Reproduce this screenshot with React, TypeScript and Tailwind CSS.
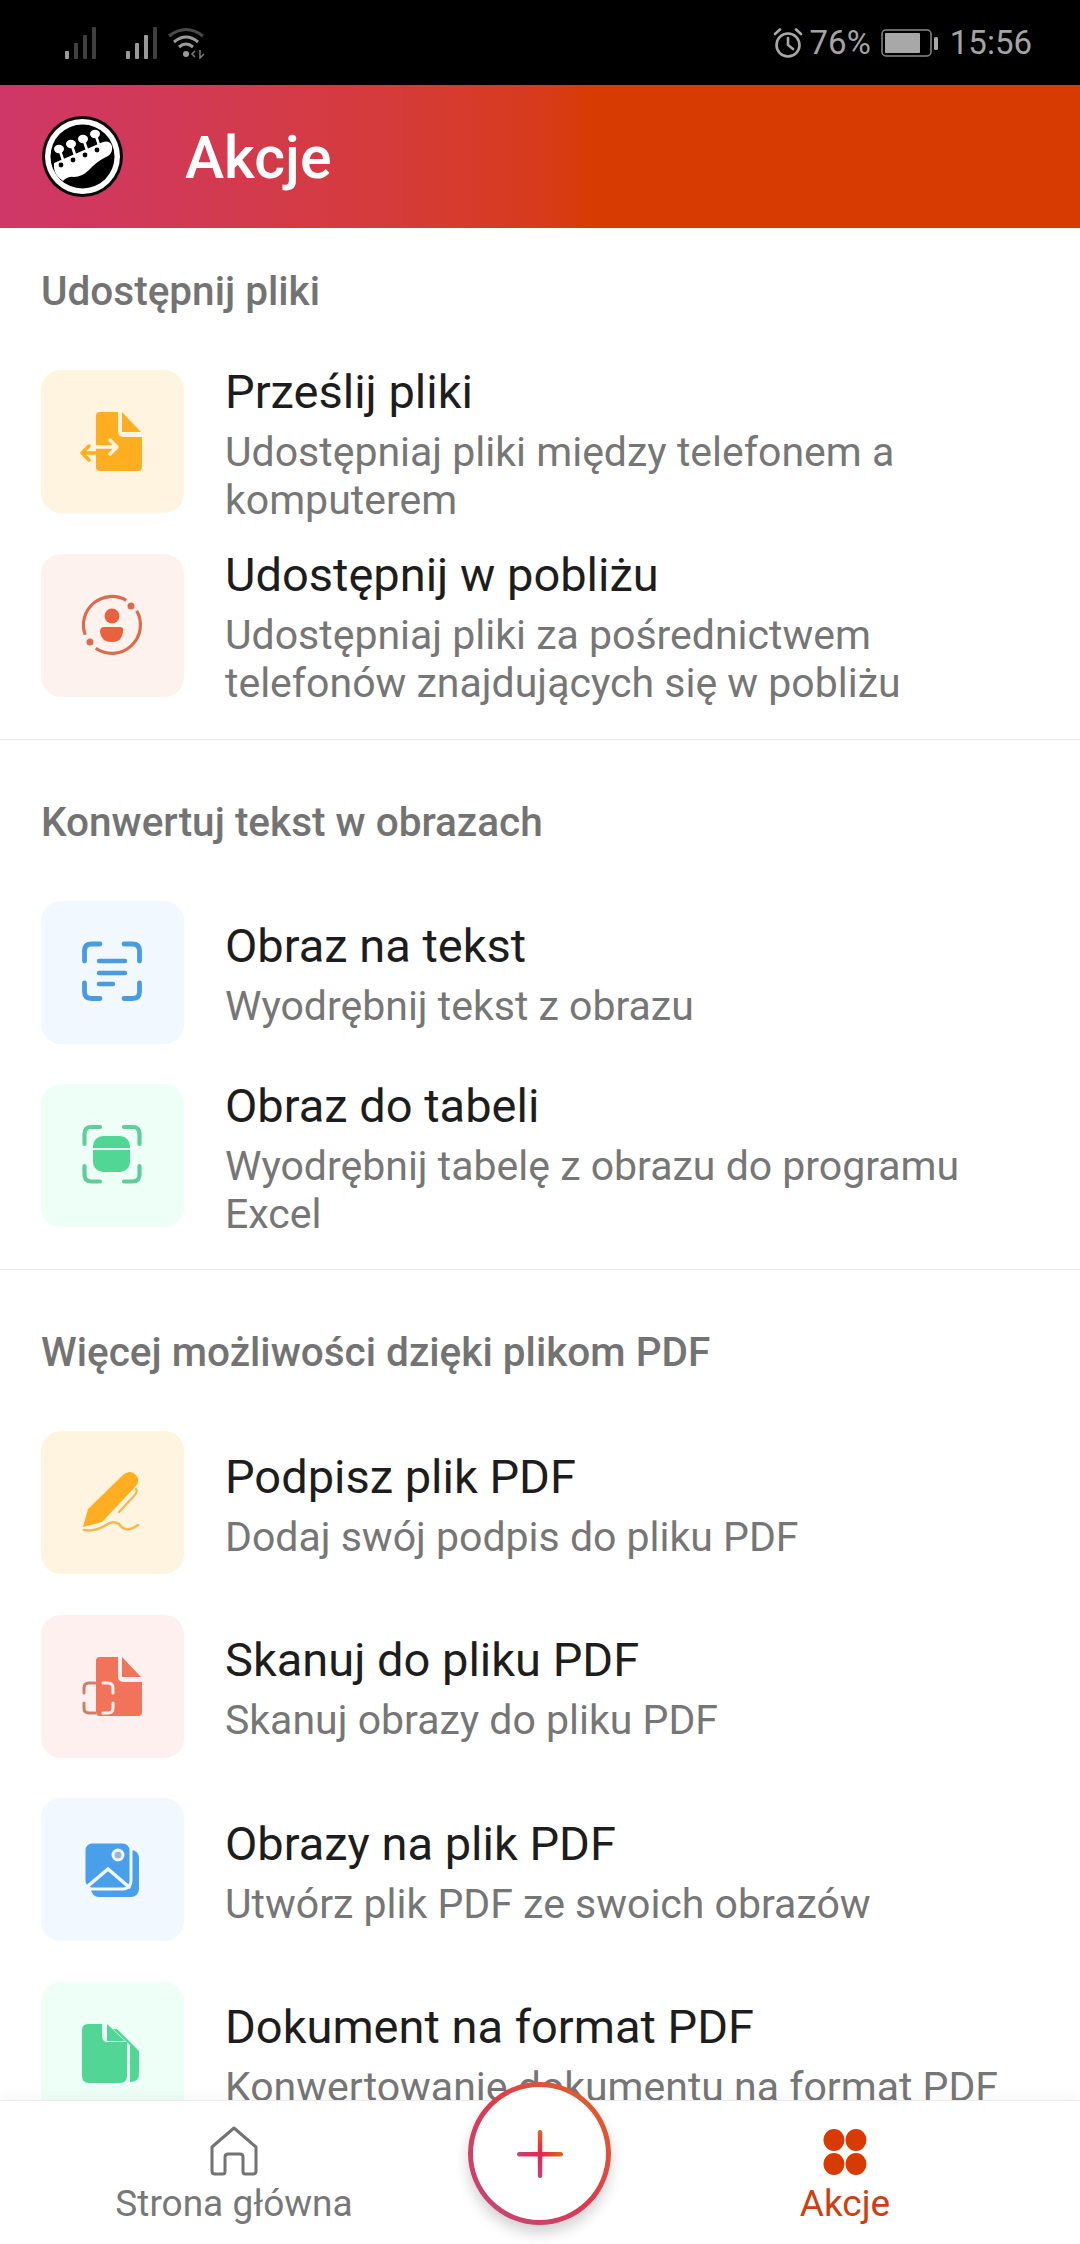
import { ReactNode } from "react";

function Logo() {
  return (
    <svg viewBox="0 0 81 81" className="w-[81px] h-[81px] shrink-0">
      <circle cx="40.5" cy="40.5" r="40.5" fill="#0a0a0a" />
      <circle cx="40.5" cy="40.5" r="37.5" fill="#ffffff" />
      <circle cx="40.5" cy="40.5" r="32" fill="#000000" />
      <path
        d="M12 47 L61 26 Q68 24 70 30 Q71 37 66 40 Q55 45 47 54 Q40 61 32 61 Q26 60 21 65 Q13 60 12 52 Z"
        fill="#ffffff"
      />
      <g stroke="#ffffff" strokeWidth="2.6">
        <line x1="18" y1="35" x2="21" y2="44" />
        <line x1="30" y1="30" x2="33" y2="39" />
        <line x1="42" y1="25" x2="45" y2="34" />
        <line x1="54" y1="20" x2="57" y2="29" />
      </g>
      <g fill="#ffffff">
        <ellipse cx="17" cy="33" rx="5" ry="4.2" />
        <ellipse cx="29" cy="28" rx="5" ry="4.2" />
        <ellipse cx="41" cy="23" rx="5" ry="4.2" />
        <ellipse cx="53" cy="18" rx="5" ry="4.2" />
      </g>
      <g fill="#000000">
        <circle cx="19" cy="49" r="2.4" />
        <circle cx="31" cy="44" r="2.4" />
        <circle cx="43" cy="39" r="2.4" />
        <circle cx="55" cy="34" r="2.4" />
      </g>
    </svg>
  );
}

function Signal({ bright }: { bright: number }) {
  return (
    <svg viewBox="0 0 32 32" className="w-[32px] h-[32px]">
      {[0, 1, 2, 3].map((i) => (
        <rect
          key={i}
          x={i * 9}
          y={24 - i * 8}
          width="4"
          height={8 + i * 8}
          rx="1"
          fill={i < bright ? "#9a9a9a" : "#3f3f3f"}
        />
      ))}
    </svg>
  );
}

function StatusBar() {
  return (
    <div className="h-[85px] bg-black flex items-center justify-between pl-[65px] pr-[48px] font-['Roboto',sans-serif] text-[33px] text-[#a4a4a4]">
      <div className="flex items-center">
        <Signal bright={1} />
        <div className="ml-[29px]">
          <Signal bright={3} />
        </div>
        <svg viewBox="0 0 38 32" fill="none" className="w-[38px] h-[32px] ml-[10px]">
          <path d="M1 9 Q18 -4 35 9" stroke="#4a4a4a" strokeWidth="3" />
          <path d="M6 15 Q18 5 30 15" stroke="#9a9a9a" strokeWidth="3" />
          <path d="M11 20 Q18 14 25 20" stroke="#9a9a9a" strokeWidth="3" />
          <circle cx="18" cy="27" r="3" fill="#9a9a9a" />
          <path d="M27 24 L24 27 L27 30 M32 23 V31 L36 27" stroke="#7a7a7a" strokeWidth="1.5" />
        </svg>
      </div>
      <div className="flex items-center">
        <svg viewBox="0 0 30 30" fill="none" stroke="#a8a8a8" strokeWidth="2.6" strokeLinecap="round" className="w-[30px] h-[30px]">
          <circle cx="15" cy="17" r="11.5" />
          <path d="M15 10 V17 L20 21" />
          <path d="M2 6 L7 1.5 M28 6 L23 1.5" />
        </svg>
        <span className="ml-[7px]">76%</span>
        <svg viewBox="0 0 58 28" fill="none" className="w-[58px] h-[28px] ml-[10px]">
          <rect x="1" y="1" width="49" height="26" rx="4" stroke="#8a8a8a" strokeWidth="1.5" />
          <rect x="4" y="4" width="35" height="20" rx="1" fill="#a8a8a8" />
          <rect x="53" y="8" width="4" height="13" rx="1.5" fill="#a8a8a8" />
        </svg>
        <span className="ml-[11px]">15:56</span>
      </div>
    </div>
  );
}

function FileShape({ fill }: { fill: string }) {
  return (
    <>
      <path d="M59 42 H77 V61 Q77 67 83 67 H101 V97 Q101 101 97 101 H59 Q55 101 55 97 V46 Q55 42 59 42 Z" fill={fill} />
      <path d="M81 42 L100 62 H81 Z" fill={fill} />
    </>
  );
}

const scanCorners = "M43.5 60 V50 Q43.5 43 50.5 43 H59 M83 43 H91.5 Q98.5 43 98.5 50 V60 M43.5 82 V90.5 Q43.5 97.5 50.5 97.5 H59 M83 97.5 H91.5 Q98.5 97.5 98.5 90.5 V82";

function TransferIcon() {
  return (
    <>
      <FileShape fill="#FFAE21" />
      <path d="M55 77 H76 M69 70 L76 77 L69 84" stroke="#FFF4DF" strokeWidth="3.5" fill="none" strokeLinecap="round" strokeLinejoin="round" />
      <path d="M55 83 H42 M48 76 L41 83 L48 90" stroke="#FFAE21" strokeWidth="3.5" fill="none" strokeLinecap="round" strokeLinejoin="round" />
    </>
  );
}

function NearbyIcon() {
  return (
    <>
      <path d="M85.25 46.3 A28.5 28.5 0 0 0 44.2 80.75 M95.7 56.75 A28.5 28.5 0 0 1 54.7 94.3" stroke="#DC6A4C" strokeWidth="3.2" fill="none" />
      <circle cx="90" cy="52" r="3.5" fill="#DC6A4C" />
      <circle cx="49" cy="88" r="3.5" fill="#DC6A4C" />
      <circle cx="71" cy="62" r="7.5" fill="#EA6140" />
      <path d="M63 73 H79 Q83 73 82 78 Q81 88 71 88 Q60 88 59 78 Q59 73 63 73 Z" fill="#EA6140" />
    </>
  );
}

function ScanTextIcon() {
  return (
    <g stroke="#4A9BE0" strokeLinecap="round" fill="none">
      <path d={scanCorners} strokeWidth="4.8" />
      <path d="M58 60 H84 M58 72 H84 M58 83 H72" strokeWidth="4.5" />
    </g>
  );
}

function ScanTableIcon() {
  return (
    <>
      <path d={scanCorners} stroke="#5FCE9C" strokeWidth="4.2" strokeLinecap="round" fill="none" />
      <rect x="52" y="52" width="37" height="36" rx="10" fill="#52D696" />
      <rect x="52" y="64" width="37" height="2" fill="#EDFFF7" />
    </>
  );
}

function SignIcon() {
  return (
    <>
      <path d="M42 96 L47 78 L82 44 Q89 38 95 44 Q100 50 94 56 L61 91 Z" fill="#FFAE21" />
      <path d="M78 81 L93 65 Q97 61 95 58" stroke="#F4BA52" strokeWidth="2.4" strokeLinecap="round" fill="none" />
      <path d="M43 99 Q55 101 65 94 Q72 89 78 93 Q85 103 97 94" stroke="#F4BA52" strokeWidth="2.6" strokeLinecap="round" fill="none" />
    </>
  );
}

function ScanPdfIcon() {
  return (
    <>
      <FileShape fill="#F1745A" />
      <path d="M54 68 H48 Q43 68 43 73 V78 M43 88 V93 Q43 98 48 98 H54" stroke="#CF7F68" strokeWidth="3" strokeLinecap="round" fill="none" />
      <path d="M62 68 H67 Q72 68 72 73 V78 M72 88 V93 Q72 98 67 98 H62" stroke="#FDF0EE" strokeWidth="3" strokeLinecap="round" fill="none" />
    </>
  );
}

function ImagesIcon() {
  return (
    <>
      <rect x="50" y="52" width="48" height="47" rx="8" fill="#4A9FEA" />
      <rect x="43" y="44" width="47" height="47" rx="8" fill="#4A9FEA" stroke="#F1F8FF" strokeWidth="3" />
      <path d="M47 88 L67 71 L88 89" stroke="#F1F8FF" strokeWidth="3.5" fill="none" strokeLinecap="round" />
      <circle cx="77" cy="57" r="5" fill="#9bb8cf" stroke="#F1F8FF" strokeWidth="3" />
    </>
  );
}

function DocumentIcon() {
  return (
    <>
      <path d="M72 47 H76 L98 69 V92 Q98 100 89 100 V63 Z" fill="#52D696" />
      <path d="M47 42 H61 V54 Q61 60 67 60 H86 V94 Q86 101 79 101 H48 Q41 101 41 94 V48 Q41 42 47 42 Z" fill="#52D696" />
      <path d="M66 42 L84 59 H66 Z" fill="#52D696" />
    </>
  );
}

function Row({ bg, icon, title, sub }: { bg: string; icon: ReactNode; title: string; sub: ReactNode }) {
  return (
    <div className="flex items-center gap-[41px] h-[143px]">
      <div className={`w-[143px] h-[143px] shrink-0 rounded-[20px] ${bg}`}>
        <svg viewBox="0 0 143 143" className="w-[143px] h-[143px]">
          {icon}
        </svg>
      </div>
      <div className="min-w-0 flex-1 pt-[3px]">
        <div className="text-[47px] leading-[58px] text-[#1d1d1d]">{title}</div>
        <div className="text-[41px] leading-[48px] text-[#767676] mt-[7px] whitespace-nowrap">{sub}</div>
      </div>
    </div>
  );
}

function SectionTitle({ children }: { children: ReactNode }) {
  return <div className="text-[40.5px] leading-[44px] font-medium text-[#737373] mb-[57px]">{children}</div>;
}

function BottomNav() {
  return (
    <div className="relative h-[144px] shrink-0 bg-white border-t border-[#ececec] shadow-[0_-6px_12px_rgba(0,0,0,0.03)] grid grid-cols-2">
      <div className="flex flex-col items-center pr-[72px]">
        <svg viewBox="0 0 48 50" fill="none" stroke="#737373" strokeWidth="3" strokeLinejoin="round" className="w-[48px] h-[50px] mt-[25px]">
          <path d="M2 21 L24 2 L46 21 V45 Q46 48 43 48 H35 Q33 48 33 45 V31 Q33 28 30 28 H18 Q15 28 15 31 V45 Q15 48 13 48 H5 Q2 48 2 45 Z" />
        </svg>
        <div className="text-[37px] leading-[40px] text-[#777777] mt-[8px]">Strona główna</div>
      </div>
      <div className="flex flex-col items-center pl-[70px]">
        <svg viewBox="0 0 44 46" fill="#D83B01" className="w-[44px] h-[46px] mt-[28px]">
          <ellipse cx="11" cy="11" rx="10.5" ry="11" />
          <ellipse cx="33" cy="11" rx="10.5" ry="11" />
          <ellipse cx="11" cy="35" rx="10.5" ry="11" />
          <ellipse cx="33" cy="35" rx="10.5" ry="11" />
        </svg>
        <div className="text-[37px] leading-[40px] text-[#CF3E0E] mt-[9px]">Akcje</div>
      </div>
      <div className="absolute left-[468px] top-[-19px] w-[143px] h-[143px] rounded-full p-[5px] bg-linear-to-bl from-[#E0661A] via-[#DB3A4C] to-[#C0457F] shadow-[0_8px_14px_rgba(0,0,0,0.18)]">
        <div className="w-full h-full rounded-full bg-white flex items-center justify-center">
          <svg viewBox="0 0 46 48" className="w-[46px] h-[48px]">
            <defs>
              <linearGradient id="plusH" x1="0" x2="1" y1="0" y2="0">
                <stop offset="0" stopColor="#C2457F" />
                <stop offset="0.5" stopColor="#E5234F" />
                <stop offset="1" stopColor="#E0661A" />
              </linearGradient>
              <linearGradient id="plusV" x1="0" x2="0" y1="0" y2="1">
                <stop offset="0" stopColor="#E0661A" />
                <stop offset="0.5" stopColor="#E5234F" />
                <stop offset="1" stopColor="#C0457F" />
              </linearGradient>
            </defs>
            <rect x="0" y="22" width="46" height="4.5" rx="2.2" fill="url(#plusH)" />
            <rect x="20.8" y="0" width="4.5" height="48" rx="2.2" fill="url(#plusV)" />
          </svg>
        </div>
      </div>
    </div>
  );
}

export default function App() {
  return (
    <div className="w-[1080px] h-[2244px] flex flex-col overflow-hidden bg-white font-['Roboto',sans-serif]">
      <StatusBar />
      <header className="h-[143px] shrink-0 flex items-center pl-[42px] bg-linear-to-r from-[#CF3768] to-[#D83B01] to-[55%]">
        <Logo />
        <h1 className="ml-[62px] mt-[3px] text-[59px] font-medium text-white">Akcje</h1>
      </header>
      <main className="flex-1 min-h-0 overflow-hidden">
        <section className="pt-[41px] pb-[42px] pl-[41px] pr-[30px] border-b border-[#e6e6e6]">
          <SectionTitle>Udostępnij pliki</SectionTitle>
          <div className="flex flex-col gap-[40.5px]">
            <Row
              bg="bg-[#FFF4DF]"
              icon={<TransferIcon />}
              title="Prześlij pliki"
              sub={<>Udostępniaj pliki między telefonem a<br />komputerem</>}
            />
            <Row
              bg="bg-[#FEF2EE]"
              icon={<NearbyIcon />}
              title="Udostępnij w pobliżu"
              sub={<>Udostępniaj pliki za pośrednictwem<br />telefonów znajdujących się w pobliżu</>}
            />
          </div>
        </section>
        <section className="pt-[60px] pb-[42px] pl-[41px] pr-[30px] border-b border-[#e6e6e6]">
          <div className="mb-[1px]">
            <SectionTitle>Konwertuj tekst w obrazach</SectionTitle>
          </div>
          <div className="flex flex-col gap-[40.5px]">
            <Row bg="bg-[#F1F8FF]" icon={<ScanTextIcon />} title="Obraz na tekst" sub="Wyodrębnij tekst z obrazu" />
            <Row
              bg="bg-[#EDFFF7]"
              icon={<ScanTableIcon />}
              title="Obraz do tabeli"
              sub={<>Wyodrębnij tabelę z obrazu do programu<br />Excel</>}
            />
          </div>
        </section>
        <section className="pt-[60px] pl-[41px] pr-[30px]">
          <SectionTitle>Więcej możliwości dzięki plikom PDF</SectionTitle>
          <div className="flex flex-col gap-[40.5px] mt-[3px]">
            <Row bg="bg-[#FFF4DF]" icon={<SignIcon />} title="Podpisz plik PDF" sub="Dodaj swój podpis do pliku PDF" />
            <Row bg="bg-[#FDF0EE]" icon={<ScanPdfIcon />} title="Skanuj do pliku PDF" sub="Skanuj obrazy do pliku PDF" />
            <Row bg="bg-[#F1F8FF]" icon={<ImagesIcon />} title="Obrazy na plik PDF" sub="Utwórz plik PDF ze swoich obrazów" />
            <Row bg="bg-[#EDFFF7]" icon={<DocumentIcon />} title="Dokument na format PDF" sub="Konwertowanie dokumentu na format PDF" />
          </div>
        </section>
      </main>
      <BottomNav />
    </div>
  );
}
